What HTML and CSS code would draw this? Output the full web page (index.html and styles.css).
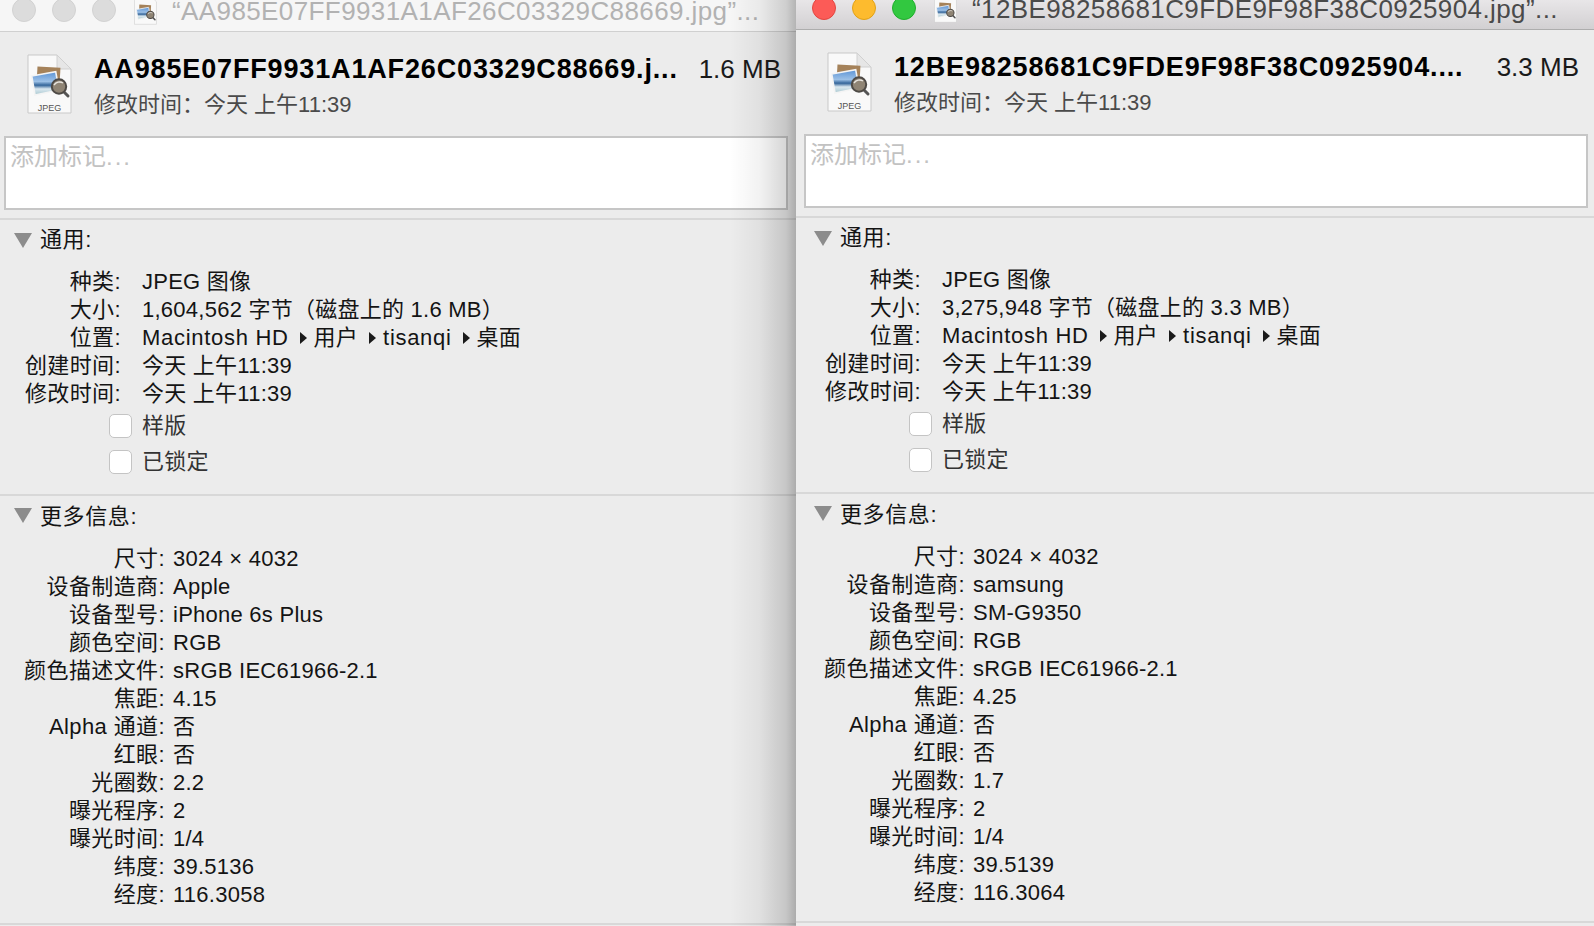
FILE: index.html
```html
<!DOCTYPE html>
<html lang="zh">
<head>
<meta charset="utf-8">
<title>简介</title>
<link rel="stylesheet" href="styles.css">
</head>
<body>
<svg class="defs" width="0" height="0">
  <defs>
    <linearGradient id="sky" x1="0" y1="0" x2="0" y2="1">
      <stop offset="0" stop-color="#5b93d6"/><stop offset=".42" stop-color="#9cc0e6"/><stop offset=".58" stop-color="#34659a"/><stop offset=".74" stop-color="#dbe8f0"/><stop offset="1" stop-color="#a7c7cf"/>
    </linearGradient>
    <symbol id="photo" viewBox="0 0 45 60">
      <rect x="10" y="13" width="23" height="18" fill="#a5825a" transform="rotate(3 21 22)"/>
      <path d="M4.7 22 28.7 17.7 32 36 8 41z" fill="url(#sky)" stroke="#f4f4f4" stroke-width="1.6"/>
      <path d="M36 37l5 5" stroke="#555" stroke-width="3" stroke-linecap="round"/>
      <circle cx="32" cy="32.5" r="7.2" fill="#8f8474" stroke="#4e4a46" stroke-width="2"/>
      <path d="M27 31c2-3 6-4 9-2" stroke="#e9e6e0" stroke-width="1.4" fill="none"/>
    </symbol>
  </defs>
</svg>

<main class="desktop">
  <section class="window window-back">
    <header class="titlebar">
      <span class="light"></span><span class="light"></span><span class="light"></span>
      <svg class="title-icon" viewBox="0 0 45 60"><path class="doc-shape" d="M1 1H30L44 15V59H1Z"/><use href="#photo" y="8" width="45" height="60"/></svg>
      <span class="title-text">“AA985E07FF9931A1AF26C03329C88669.jpg”...</span>
    </header>
    <div class="summary">
      <svg class="file-icon" viewBox="0 0 45 60">
        <path class="doc-shape" d="M1 1H30L44 15V59H1Z"/><path class="doc-fold" d="M30 1V15H44Z"/>
        <use href="#photo" width="45" height="60"/>
        <text class="file-type" x="22.5" y="57" text-anchor="middle">JPEG</text>
      </svg>
      <div class="summary-text">
        <div class="file-name">AA985E07FF9931A1AF26C03329C88669.j...</div>
        <div class="file-date">修改时间：今天 上午11:39</div>
      </div>
      <div class="file-size">1.6 MB</div>
    </div>
    <div class="tags">添加标记<span class="dots">...</span></div>
    <div class="section section-general">
      <h2 class="section-head"><i class="disclosure"></i>通用:</h2>
      <div class="rows rows-general">
        <div class="label">种类:</div><div class="value">JPEG 图像</div>
        <div class="label">大小:</div><div class="value">1,604,562 字节（磁盘上的 1.6 MB）</div>
        <div class="label">位置:</div><div class="value path"><span class="latin">Macintosh HD</span><i class="arrow"></i><span>用户</span><i class="arrow"></i><span class="latin">tisanqi</span><i class="arrow"></i><span>桌面</span></div>
        <div class="label">创建时间:</div><div class="value">今天 上午11:39</div>
        <div class="label">修改时间:</div><div class="value">今天 上午11:39</div>
        <div class="check"><span class="box"></span></div><div class="value check-label">样版</div>
        <div class="check"><span class="box"></span></div><div class="value check-label">已锁定</div>
      </div>
    </div>
    <div class="section section-more">
      <h2 class="section-head"><i class="disclosure"></i>更多信息:</h2>
      <div class="rows rows-more">
        <div class="label">尺寸:</div><div class="value">3024 × 4032</div>
        <div class="label">设备制造商:</div><div class="value">Apple</div>
        <div class="label">设备型号:</div><div class="value">iPhone 6s Plus</div>
        <div class="label">颜色空间:</div><div class="value">RGB</div>
        <div class="label">颜色描述文件:</div><div class="value">sRGB IEC61966-2.1</div>
        <div class="label">焦距:</div><div class="value">4.15</div>
        <div class="label">Alpha 通道:</div><div class="value">否</div>
        <div class="label">红眼:</div><div class="value">否</div>
        <div class="label">光圈数:</div><div class="value">2.2</div>
        <div class="label">曝光程序:</div><div class="value">2</div>
        <div class="label">曝光时间:</div><div class="value">1/4</div>
        <div class="label">纬度:</div><div class="value">39.5136</div>
        <div class="label">经度:</div><div class="value">116.3058</div>
      </div>
    </div>
    <div class="end-rule"></div>
  </section>

  <section class="window window-front">
    <header class="titlebar">
      <span class="light light-red"></span><span class="light light-yellow"></span><span class="light light-green"></span>
      <svg class="title-icon" viewBox="0 0 45 60"><path class="doc-shape" d="M1 1H30L44 15V59H1Z"/><use href="#photo" y="8" width="45" height="60"/></svg>
      <span class="title-text">“12BE98258681C9FDE9F98F38C0925904.jpg”...</span>
    </header>
    <div class="summary">
      <svg class="file-icon" viewBox="0 0 45 60">
        <path class="doc-shape" d="M1 1H30L44 15V59H1Z"/><path class="doc-fold" d="M30 1V15H44Z"/>
        <use href="#photo" width="45" height="60"/>
        <text class="file-type" x="22.5" y="57" text-anchor="middle">JPEG</text>
      </svg>
      <div class="summary-text">
        <div class="file-name">12BE98258681C9FDE9F98F38C0925904....</div>
        <div class="file-date">修改时间：今天 上午11:39</div>
      </div>
      <div class="file-size">3.3 MB</div>
    </div>
    <div class="tags">添加标记<span class="dots">...</span></div>
    <div class="section section-general">
      <h2 class="section-head"><i class="disclosure"></i>通用:</h2>
      <div class="rows rows-general">
        <div class="label">种类:</div><div class="value">JPEG 图像</div>
        <div class="label">大小:</div><div class="value">3,275,948 字节（磁盘上的 3.3 MB）</div>
        <div class="label">位置:</div><div class="value path"><span class="latin">Macintosh HD</span><i class="arrow"></i><span>用户</span><i class="arrow"></i><span class="latin">tisanqi</span><i class="arrow"></i><span>桌面</span></div>
        <div class="label">创建时间:</div><div class="value">今天 上午11:39</div>
        <div class="label">修改时间:</div><div class="value">今天 上午11:39</div>
        <div class="check"><span class="box"></span></div><div class="value check-label">样版</div>
        <div class="check"><span class="box"></span></div><div class="value check-label">已锁定</div>
      </div>
    </div>
    <div class="section section-more">
      <h2 class="section-head"><i class="disclosure"></i>更多信息:</h2>
      <div class="rows rows-more">
        <div class="label">尺寸:</div><div class="value">3024 × 4032</div>
        <div class="label">设备制造商:</div><div class="value">samsung</div>
        <div class="label">设备型号:</div><div class="value">SM-G9350</div>
        <div class="label">颜色空间:</div><div class="value">RGB</div>
        <div class="label">颜色描述文件:</div><div class="value">sRGB IEC61966-2.1</div>
        <div class="label">焦距:</div><div class="value">4.25</div>
        <div class="label">Alpha 通道:</div><div class="value">否</div>
        <div class="label">红眼:</div><div class="value">否</div>
        <div class="label">光圈数:</div><div class="value">1.7</div>
        <div class="label">曝光程序:</div><div class="value">2</div>
        <div class="label">曝光时间:</div><div class="value">1/4</div>
        <div class="label">纬度:</div><div class="value">39.5139</div>
        <div class="label">经度:</div><div class="value">116.3064</div>
      </div>
    </div>
    <div class="end-rule"></div>
  </section>
</main>
</body>
</html>
```

FILE: styles.css
```css
* { box-sizing: border-box; }
html, body { margin: 0; height: 100%; overflow: hidden; }
body {
  background: #ececec;
  color: #141414;
  font-family: "Liberation Sans", "Noto Sans CJK SC", sans-serif;
  font-size: 22px;
}
.defs { position: absolute; }
.desktop { display: flex; height: 926px; }

.window { position: relative; background: #ececec; overflow: hidden; }
.window-back { flex: 0 0 796px; }
.window-front { flex: 1; padding-left: 4px; }
.window-back::after {
  content: "";
  position: absolute;
  top: 0; right: 0; bottom: 0;
  width: 66px;
  background: linear-gradient(to right, rgba(0,0,0,0), rgba(0,0,0,.05) 45%, rgba(0,0,0,.16) 85%, rgba(0,0,0,.27));
}

/* title bar */
.titlebar {
  display: flex;
  align-items: center;
  overflow: hidden;
  white-space: nowrap;
  font-size: 26px;
  padding-left: 12px;
}
.window-back .titlebar {
  height: 32px;
  padding-bottom: 12px;
  background: #f6f6f6;
  border-bottom: 1px solid #d0d0d0;
  color: #b2b2b2;
}
.window-front .titlebar {
  height: 30px;
  padding-bottom: 14px;
  margin-left: -4px;
  padding-left: 16px;
  background: linear-gradient(#e8e6e8, #d2d0d2);
  border-bottom: 1px solid #adadad;
  color: #4a4a4a;
}
.light {
  flex: none;
  width: 24px; height: 24px;
  margin-right: 16px;
  border-radius: 50%;
  background: #dcdcdc;
  border: 1px solid #d2d2d2;
}
.light-red { background: #fc5b57; border-color: #e2463f; }
.light-yellow { background: #fdbb2e; border-color: #e1a116; }
.light-green { background: #32c840; border-color: #1fae2c; }
.title-icon { flex: none; width: 23px; height: 31px; margin: 0 15px 0 2px; }
.title-text { flex: none; letter-spacing: .4px; margin-top: 3px; }

/* summary */
.doc-shape { fill: #f9f9f9; stroke: #c9c9c9; stroke-width: 1; }
.doc-fold { fill: #e6e6e6; stroke: #d0d0d0; stroke-width: 1; }
.file-type { font-family: "Liberation Sans", sans-serif; font-size: 9px; fill: #555; }
.summary {
  display: flex;
  height: 104px;
  padding: 22px 15px 0 27px;
}
.file-icon { flex: none; width: 45px; height: 60px; }
.summary-text { flex: 1; min-width: 0; margin-left: 22px; white-space: nowrap; }
.file-name { font-weight: 700; font-size: 27px; line-height: 30px; color: #000; letter-spacing: .85px; }
.file-date { color: #4a4a4a; line-height: 36px; margin-top: 3px; }
.file-size { font-size: 26px; line-height: 30px; color: #1a1a1a; white-space: nowrap; }

/* tag field */
.tags {
  height: 74px;
  margin: 0 8px 8px 4px;
  padding: 3px 4px 0;
  background: #fff;
  border: 2px solid #c6c6c6;
  color: #c2c2c2;
  font-size: 24px;
  line-height: 32px;
}
.window-front .tags { margin-left: 4px; margin-right: 6px; }
.dots { letter-spacing: 2px; }

/* sections */
.section { border-top: 2px solid #d8d8d8; }
.window-front .section, .window-front .end-rule { margin-left: -4px; padding-left: 4px; }
.section-head {
  display: flex;
  align-items: center;
  margin: 0;
  font-size: 22px;
  font-weight: 400;
  letter-spacing: .6px;
  padding-left: 14px;
}
.section-general .section-head { height: 40px; padding-bottom: 6px; }
.section-more .section-head { height: 38px; padding-bottom: 2px; }
.disclosure {
  width: 0; height: 0;
  margin-right: 8px;
  border-style: solid;
  border-width: 15px 9px 0;
  border-color: #8c8c8c transparent transparent;
}
.section-general .disclosure { margin-top: 6px; }
.section-more .disclosure { margin-top: 2px; }
.rows { display: grid; line-height: 28px; }
.rows-general { grid-template-columns: 121px 1fr; column-gap: 21px; padding: 8px 0 14px; }
.rows-more { grid-template-columns: 165px 1fr; column-gap: 8px; padding: 11px 0 14px; }
.label { text-align: right; white-space: nowrap; letter-spacing: .4px; }
.value { white-space: nowrap; letter-spacing: .25px; }
.path { display: flex; align-items: center; }
.latin { letter-spacing: .7px; }
.arrow {
  width: 0; height: 0;
  margin: 0 7px 0 11px;
  border-style: solid;
  border-width: 6px 0 6px 7px;
  border-color: transparent transparent transparent #1a1a1a;
}
.check { display: flex; justify-content: flex-end; align-items: center; height: 36px; }
.check-label { line-height: 36px; color: #333; }
.box {
  width: 23px; height: 24px;
  margin-right: -11px;
  background: #fff;
  border: 1px solid #c4c4c4;
  border-radius: 5px;
}
.end-rule { border-top: 2px solid #d8d8d8; }
```
